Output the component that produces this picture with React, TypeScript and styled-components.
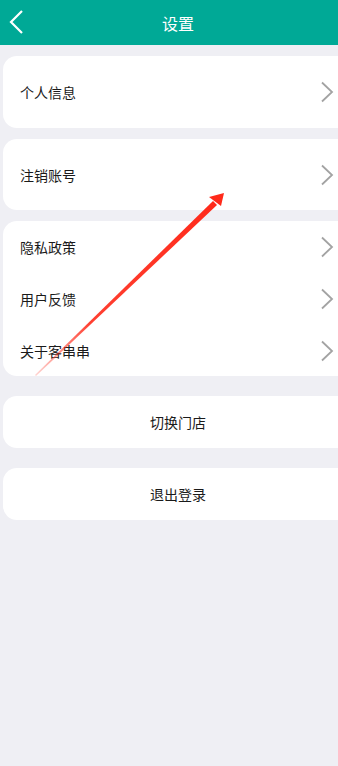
import React from "react";
import styled, { createGlobalStyle } from "styled-components";

const GlobalStyle = createGlobalStyle`
  html, body {
    margin: 0;
    padding: 0;
    background: #efeff4;
    overflow: hidden;
  }
  body {
    font-family: "Noto Sans CJK SC", "Noto Sans", sans-serif;
  }
`;

const Page = styled.div`
  position: relative;
  width: 100%;
  min-height: 766px;
  background: #efeff4;
`;

// the shot is cropped on the right, so the title sits right of centre
const Header = styled.div`
  height: 45px;
  background: #00a996;
  display: flex;
  align-items: center;
  justify-content: center;
  padding-left: 18px;
  position: relative;
  color: #fff;
  font-size: 16px;
`;

const Back = styled.div`
  position: absolute;
  left: 8px;
  top: 9px;
  width: 16px;
  height: 26px;
  display: flex;
`;

const Content = styled.div`
  display: flex;
  flex-direction: column;
  padding: 11px 0 0 3px;
`;

const Card = styled.div<{ $gap: number }>`
  background: #fff;
  border-radius: 14px 0 0 14px;
  margin-bottom: ${(p) => p.$gap}px;
  overflow: hidden;
`;

const Row = styled.div<{ $h: number }>`
  height: ${(p) => p.$h}px;
  display: flex;
  align-items: center;
  justify-content: space-between;
  padding: 0 4px 0 17px;
  font-size: 14px;
  color: #1a1a1a;
`;

const Button = styled.div`
  height: 52px;
  display: flex;
  align-items: center;
  justify-content: center;
  padding-left: 15px;
  font-size: 14px;
  color: #1a1a1a;
`;

const Overlay = styled.svg`
  position: absolute;
  left: 0;
  top: 0;
  pointer-events: none;
`;

function Chevron() {
  return (
    <svg width="14" height="22" viewBox="0 0 14 22">
      <polyline
        points="2,1.5 12,11 2,20.5"
        fill="none"
        stroke="#a3a3a3"
        strokeWidth="1.8"
      />
    </svg>
  );
}

function Item({ label, h }: { label: string; h: number }) {
  return (
    <Row $h={h}>
      <span>{label}</span>
      <Chevron />
    </Row>
  );
}

export default function App() {
  return (
    <Page>
      <GlobalStyle />
      <Header>
        <Back>
          <svg width="16" height="26" viewBox="0 0 16 26">
            <polyline
              points="14,2 3,13 14,24"
              fill="none"
              stroke="#fff"
              strokeWidth="2.2"
            />
          </svg>
        </Back>
        设置
      </Header>
      <Content>
        <Card $gap={11}>
          <Item label="个人信息" h={72} />
        </Card>
        <Card $gap={11}>
          <Item label="注销账号" h={71} />
        </Card>
        <Card $gap={20}>
          <Item label="隐私政策" h={52} />
          <Item label="用户反馈" h={52} />
          <Item label="关于客串串" h={51} />
        </Card>
        <Card $gap={20}>
          <Button>切换门店</Button>
        </Card>
        <Card $gap={20}>
          <Button>退出登录</Button>
        </Card>
      </Content>
      <Overlay width="338" height="766" viewBox="0 0 338 766">
        <defs>
          <linearGradient id="fade" x1="35" y1="375" x2="215" y2="200" gradientUnits="userSpaceOnUse">
            <stop offset="0" stopColor="#ff2a1a" stopOpacity="0.2" />
            <stop offset="0.3" stopColor="#ff2a1a" stopOpacity="0.9" />
            <stop offset="1" stopColor="#ff2a1a" />
          </linearGradient>
        </defs>
        <polygon points="35,375 213,201 217,205 36,376" fill="url(#fade)" />
        <polygon points="224,193 209,197 221,206" fill="#ff2a1a" />
      </Overlay>
    </Page>
  );
}
